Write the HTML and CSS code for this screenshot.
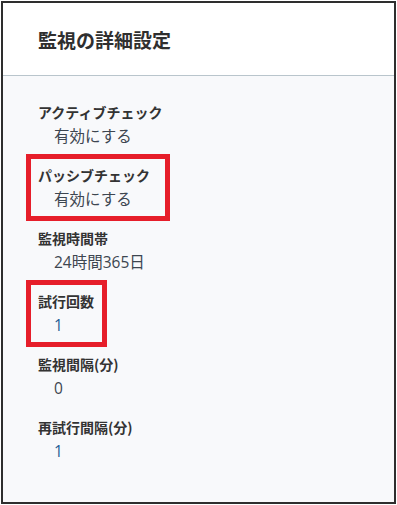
FILE: index.html
```html
<!DOCTYPE html>
<html>
<head>
  <meta charset="utf-8">
  <link rel="stylesheet" href="styles.css">
</head>
<body>
  <div class="frame">
    <div class="head">監視の詳細設定</div>
    <div class="detail">
      <div class="item">
        <div class="label">アクティブチェック</div>
        <div class="value">有効にする</div>
      </div>
      <div class="item mark mark-wide">
        <div class="label">パッシブチェック</div>
        <div class="value">有効にする</div>
      </div>
      <div class="item">
        <div class="label">監視時間帯</div>
        <div class="value">24時間365日</div>
      </div>
      <div class="item mark mark-narrow">
        <div class="label">試行回数</div>
        <div class="value num">1</div>
      </div>
      <div class="item">
        <div class="label">監視間隔(分)</div>
        <div class="value">0</div>
      </div>
      <div class="item">
        <div class="label">再試行間隔(分)</div>
        <div class="value num">1</div>
      </div>
    </div>
  </div>
</body>
</html>
```

FILE: styles.css
```css
html, body {
  height: 100%;
}
body {
  margin: 0;
  background: #ffffff;
  font-family: "Noto Sans CJK JP", "Noto Sans", sans-serif;
  color: #333;
}
.frame {
  box-sizing: border-box;
  margin: 1px;
  height: calc(100% - 2px);
  border: 2px solid #2e2e2e;
  display: flex;
  flex-direction: column;
}
.head {
  height: 73px;
  box-sizing: border-box;
  padding-left: 35px;
  display: flex;
  align-items: center;
  font-size: 19px;
  font-weight: bold;
  color: #2f2f2f;
  background: #fff;
  border-bottom: 1px solid #b9c5cc;
}
.detail {
  flex: 1;
  background: #f8f9fb;
  padding: 25px 0 0 35px;
  display: flex;
  flex-direction: column;
  gap: 15px;
}
.item {
  position: relative;
}
.label {
  font-size: 14px;
  font-weight: bold;
  line-height: 22px;
  color: #333;
}
.value {
  font-family: "Open Sans", "Noto Sans CJK JP", sans-serif;
  font-size: 15.5px;
  line-height: 26px;
  padding-left: 16px;
  color: #3d4650;
}
.value.num {
  color: #1d5b94;
}
.mark::before {
  content: "";
  position: absolute;
  top: -10px;
  bottom: -9px;
  left: -12px;
  border: 5px solid #e61e2a;
}
.mark-wide::before {
  width: 134px;
}
.mark-narrow::before {
  width: 71px;
}
```
